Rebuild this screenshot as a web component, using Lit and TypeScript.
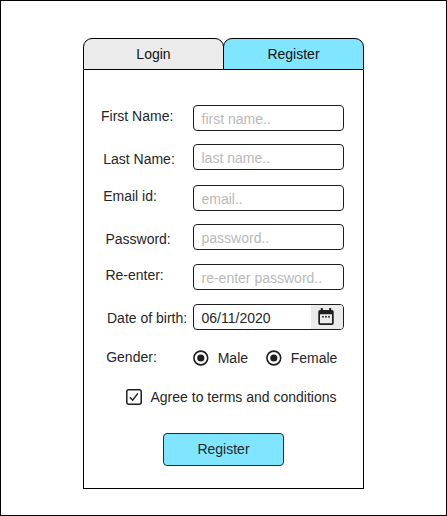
import { LitElement, html, css, svg } from "lit";
import { customElement } from "lit/decorators.js";

const radio = html`<svg class="radio" width="16" height="16" viewBox="0 0 16 16">
  <circle cx="7.8" cy="8" r="6.9" fill="#fff" stroke="#1e1e20" stroke-width="1.6" />
  <circle cx="7.8" cy="8" r="3.6" fill="#1e1e20" />
</svg>`;

const dots = [5, 8, 11].map((x) => svg`<rect x=${x - 0.8} y="8" width="1.6" height="1.6" fill="#1e1e20" />`);

const FIELDS = [
  { id: "first", label: "First Name:", hint: "first name.." },
  { id: "last", label: "Last Name:", hint: "last name.." },
  { id: "email", label: "Email id:", hint: "email.." },
  { id: "pass", label: "Password:", hint: "password.." },
  { id: "again", label: "Re-enter:", hint: "re-enter password.." },
];

@customElement("app-root")
export class AppRoot extends LitElement {
  static styles = css`
    :host {
      display: block;
      box-sizing: border-box;
      width: 447px;
      height: 516px;
      padding: 37px 0 0 82px;
      border: 1px solid #000;
      background: #fff;
      font: 14px/16px "Liberation Sans", Arial, sans-serif;
      color: #26262a;
      white-space: nowrap;
    }
    * { box-sizing: border-box; }
    .card { width: 281px; height: 451px; display: flex; flex-direction: column; }
    .tabs { display: flex; height: 32px; }
    .tab {
      width: 141px;
      padding-top: 7px;
      border: 1px solid #000;
      border-radius: 9px 9px 0 0;
      background: #ebebeb;
      text-align: center;
      color: #111;
    }
    .tab.on { margin-left: -1px; background: #80e5ff; }
    .body {
      flex: 1;
      border: 1px solid #000;
      border-top: 0;
      padding-top: 35px;
    }
    .row { display: flex; height: 26px; margin-bottom: 14px; }
    .label { width: 109px; flex: none; }
    .box {
      width: 151px;
      height: 26px;
      display: flex;
      border: 1px solid #1e1e20;
      border-radius: 4px;
      overflow: hidden;
      padding: 5px 0 0 7.5px;
      color: #b9b9b9;
    }
    .first { margin-bottom: 13px; }
    .first .label { padding: 3px 0 0 17px; }
    .last { margin-bottom: 15px; }
    .last .label { padding: 7px 0 0 19.2px; }
    .email { margin-bottom: 13px; }
    .email .label { padding: 3px 0 0 19.2px; }
    .pass .label { padding: 7px 0 0 21.4px; }
    .again .label { padding: 3px 0 0 21.4px; }
    .date .label { padding: 6px 0 0 23px; }
    .date .box { padding: 0 0 0 7.5px; color: #26262a; justify-content: space-between; }
    .value { padding-top: 5px; }
    .picker { width: 32px; background: #ebebeb; padding: 3px 0 0 7px; }
    svg { display: block; flex: none; }
    .gender { height: 19px; margin: 0 0 26px; padding-top: 5px; }
    .gender .label { padding-left: 22.2px; }
    .choice { display: flex; padding-top: 1px; gap: 8.7px; width: 73px; }
    .agree { display: flex; gap: 9px; margin: 0 0 28px 41.5px; }
    .go {
      width: 121px;
      height: 33px;
      margin-left: 79px;
      border: 1px solid #14343c;
      border-radius: 4px;
      background: #80e5ff;
      padding-top: 7px;
      text-align: center;
    }
  `;

  render() {
    return html`<main class="card">
      <nav class="tabs">
        <div class="tab">Login</div>
        <div class="tab on">Register</div>
      </nav>
      <section class="body">
        ${FIELDS.map(
          (f) => html`<div class="row ${f.id}">
            <div class="label">${f.label}</div>
            <div class="box">${f.hint}</div>
          </div>`
        )}
        <div class="row date">
          <div class="label">Date of birth:</div>
          <div class="box">
            <span class="value">06/11/2020</span>
            <span class="picker">
              <svg width="16" height="18" viewBox="0 0 16 18">
                <path
                  fill="#1e1e20"
                  fill-rule="evenodd"
                  d="M2.8 0h2v2h6.4V0h2v2h0.8q1.7 0 1.7 1.7v11.6q0 1.7-1.7 1.7H2q-1.7 0-1.7-1.7V3.7q0-1.7 1.7-1.7h0.8zM2 6.2v9.1h12V6.2z"
                />
                ${dots}
              </svg>
            </span>
          </div>
        </div>
        <div class="row gender">
          <div class="label">Gender:</div>
          <div class="choice">${radio}<span>Male</span></div>
          <div class="choice">${radio}<span>Female</span></div>
        </div>
        <div class="agree">
          <svg width="16" height="16" viewBox="0 0 16 16">
            <rect x="0.8" y="0.8" width="14.4" height="14.4" rx="2" fill="#fff" stroke="#1e1e20" stroke-width="1.5" />
            <path d="M4 8.2l2.7 3L11.9 4.4" fill="none" stroke="#1e1e20" stroke-width="1.5" />
          </svg>
          <span>Agree to terms and conditions</span>
        </div>
        <div class="go">Register</div>
      </section>
    </main>`;
  }
}
